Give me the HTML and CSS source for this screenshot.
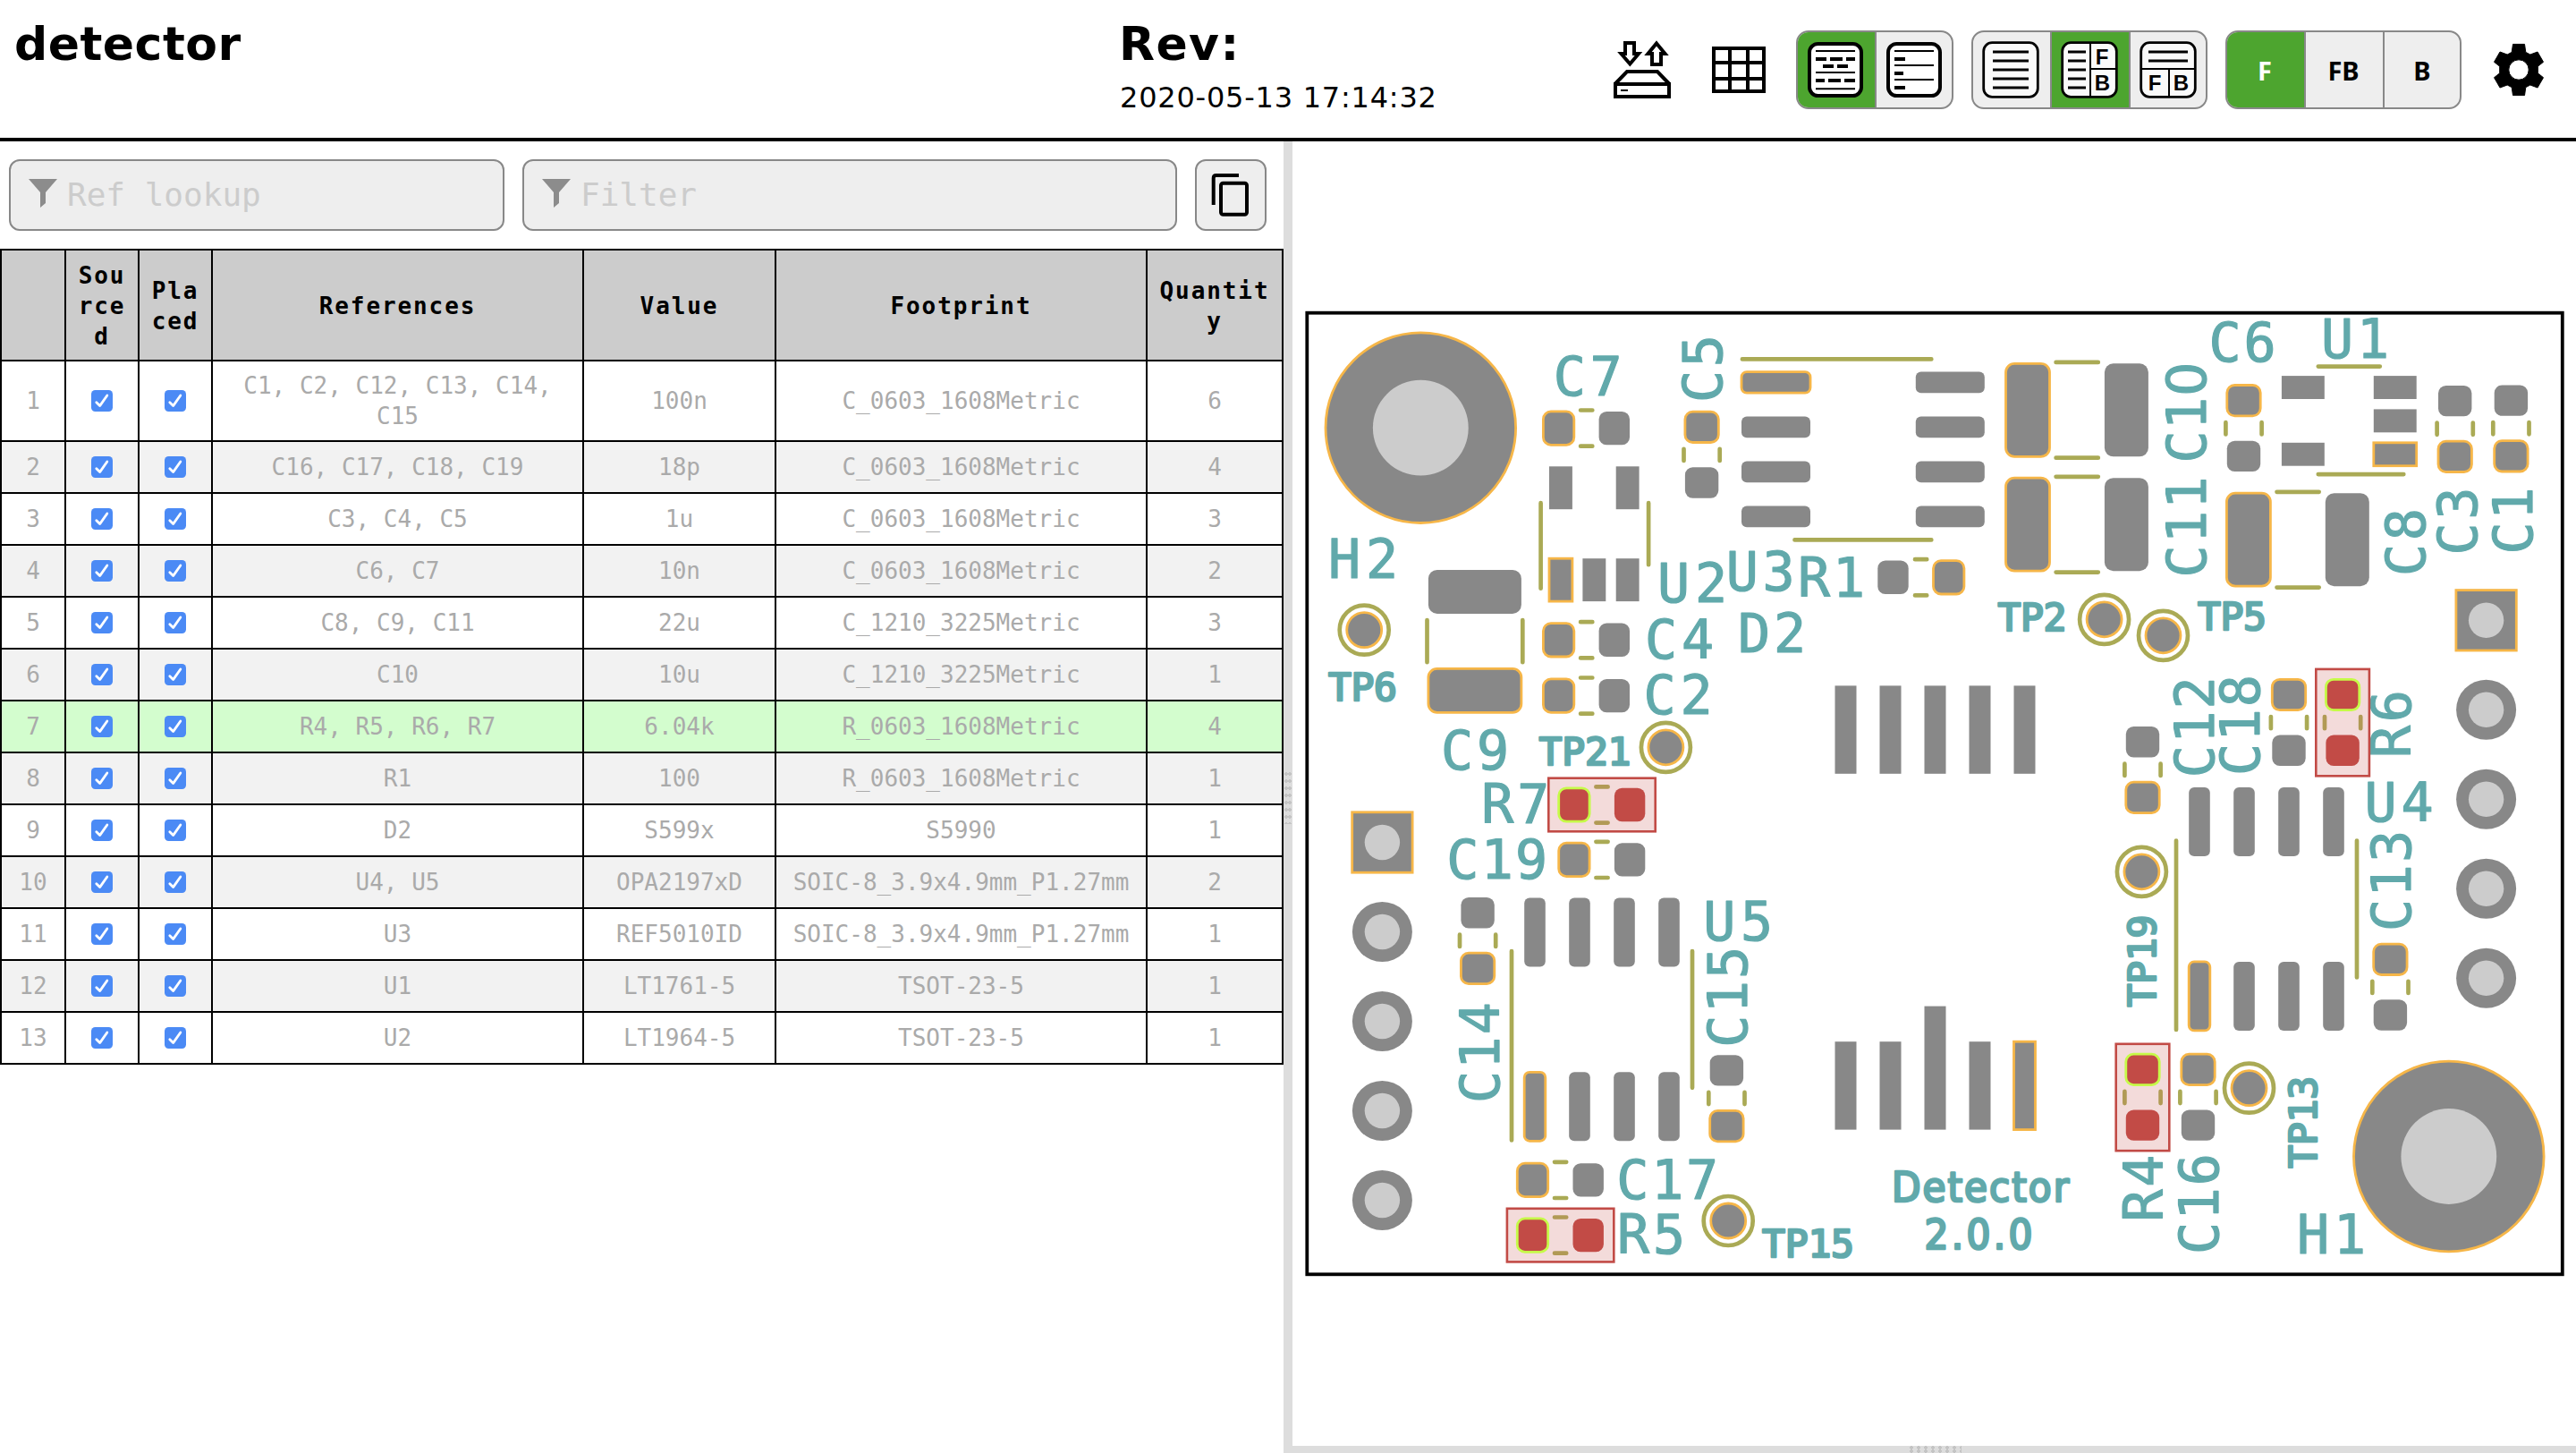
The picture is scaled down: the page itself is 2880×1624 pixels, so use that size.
FILE: index.html
```html
<!DOCTYPE html>
<html lang="en">
<head>
<meta charset="utf-8">
<title>detector BOM</title>
<link rel="stylesheet" href="styles.css">
</head>
<body>
<svg class="defs" width="0" height="0" aria-hidden="true">
  <defs>
    <symbol id="check" viewBox="0 0 24 24"><rect class="check-box" width="24" height="24" rx="4.5"/><path class="check-mark" d="M5.8 13.8 9.6 17.6 17.8 6"/></symbol>
    <symbol id="funnel" viewBox="0 0 32 32"><path class="funnel" d="M0 0H32L19 15V27L13 32V15Z"/></symbol>
    <g id="smd0603">
      <path class="silk" d="M-6.6-20.1H6.6M-6.6 20.1H6.6"/>
      <rect class="pad pin1" x="-48.3" y="-18.7" width="34.4" height="37.4" rx="8.6"/>
      <rect class="pad" x="13.9" y="-18.7" width="34.4" height="37.4" rx="8.6"/>
    </g>
    <g id="smd1210">
      <path class="silk" d="M-23.6-53.4H23.6M-23.6 53.4H23.6"/>
      <rect class="pad pin1" x="-79.7" y="-52" width="49" height="104" rx="9.8"/>
      <rect class="pad" x="30.7" y="-52" width="49" height="104" rx="9.8"/>
    </g>
    <g id="soic8">
      <path class="silk" d="M-135-101H76.4M-76.4 101H76.4"/>
      <rect class="pad pin1" x="-135.9" y="-86.8" width="77" height="23.6" rx="5.9"/>
      <rect class="pad" x="-135.9" y="-36.8" width="77" height="23.6" rx="5.9"/>
      <rect class="pad" x="-135.9" y="13.2" width="77" height="23.6" rx="5.9"/>
      <rect class="pad" x="-135.9" y="63.2" width="77" height="23.6" rx="5.9"/>
      <rect class="pad" x="58.9" y="-86.8" width="77" height="23.6" rx="5.9"/>
      <rect class="pad" x="58.9" y="-36.8" width="77" height="23.6" rx="5.9"/>
      <rect class="pad" x="58.9" y="13.2" width="77" height="23.6" rx="5.9"/>
      <rect class="pad" x="58.9" y="63.2" width="77" height="23.6" rx="5.9"/>
    </g>
    <g id="tsot5">
      <path class="silk" d="M-59.7-34.5V61M60.8-34.5V34.5"/>
      <rect class="pad" x="-50.3" y="-75.4" width="25.9" height="47.9"/>
      <rect class="pad" x="24.4" y="-75.4" width="25.9" height="47.9"/>
      <rect class="pad pin1" x="-50.3" y="27.5" width="25.9" height="47.9"/>
      <rect class="pad" x="-12.9" y="27.5" width="25.9" height="47.9"/>
      <rect class="pad" x="24.4" y="27.5" width="25.9" height="47.9"/>
    </g>
    <g id="testpoint"><circle class="silk" r="27.5"/><circle class="pad pin1" r="19.5"/></g>
    <g id="mount"><circle class="pad pin1" r="106.3"/><circle class="hole" r="53.4"/></g>
    <g id="header5">
      <rect class="pad pin1" x="-33.7" y="-33.7" width="67.4" height="67.4"/><circle class="hole" r="19.7"/>
      <circle class="pad" r="33.5" cy="100"/><circle class="hole" r="19.7" cy="100"/>
      <circle class="pad" r="33.5" cy="200"/><circle class="hole" r="19.7" cy="200"/>
      <circle class="pad" r="33.5" cy="300"/><circle class="hole" r="19.7" cy="300"/>
      <circle class="pad" r="33.5" cy="400"/><circle class="hole" r="19.7" cy="400"/>
    </g>
    <g id="picked"><rect class="picked-box" x="-59.7" y="-29.8" width="119.4" height="59.6"/><use href="#smd0603"/></g>
  </defs>
</svg>

<header class="topbar">
  <h1 class="title">detector</h1>
  <div class="meta"><div class="rev">Rev:</div><div class="date">2020-05-13 17:14:32</div></div>
  <div class="tools">
    <svg class="icon-save" width="72" height="72" viewBox="0 0 72 72"><path d="M17 6H27V18H32L22.3 29.5 12.5 18H17ZM52 6.500 61.500 18H57V30H47V18H42.500ZM6 52H66V66H6ZM6 51.500 19 38H53L66 51.500"/><path class="thin" d="M12 59H20"/></svg>
    <svg class="icon-grid" width="60" height="52" viewBox="0 0 60 52"><path d="M2 2H58V50H2ZM20 2V50M40 2V50M2 18H58M2 36H58"/></svg>
    <div class="group">
      <div class="btn on"><svg width="62" height="62" viewBox="0 0 62 62"><rect class="frame heavy" x="2" y="2" width="58" height="58" rx="9.500"/><path class="l2" d="M9 10H53M9 34H53M9 52.200H53"/><path class="l4" d="M9 19H21M25 19H39M43 19H53M17 27H29M33 27H45M9 43H19M23 43H37M41 43H53"/></svg></div>
      <div class="btn"><svg width="62" height="62" viewBox="0 0 62 62"><rect class="frame heavy" x="2" y="2" width="58" height="58" rx="9.500"/><path class="l2" d="M9 10H53M9 26H53M9 42H53"/><path class="l4" d="M9 19H21M9 35H19M9 51H21"/></svg></div>
    </div>
    <div class="group">
      <div class="btn"><svg width="64" height="64" viewBox="0 0 64 64"><rect class="frame" x="1.700" y="1.700" width="60.600" height="60.600" rx="9.500"/><path class="l3" d="M12 12H52M12 22H52M12 32H52M12 42H52M12 52H52"/></svg></div>
      <div class="btn on"><svg width="64" height="64" viewBox="0 0 64 64"><rect class="frame" x="1.700" y="1.700" width="60.600" height="60.600" rx="9.500"/><path class="l3" d="M8 12H28M8 22H28M8 32H28M8 42H28M8 52H28"/><path class="l2" d="M33 2V62M33 31H62"/><text x="46" y="26">F</text><text x="46.500" y="55">B</text></svg></div>
      <div class="btn"><svg width="64" height="64" viewBox="0 0 64 64"><rect class="frame" x="1.700" y="1.700" width="60.600" height="60.600" rx="9.500"/><path class="l3" d="M10 12H54M10 22H54"/><path class="l2" d="M2 31H62M33 31V62"/><text x="17" y="55">F</text><text x="46.500" y="55">B</text></svg></div>
    </div>
    <div class="group">
      <div class="btn on">F</div><div class="btn">FB</div><div class="btn">B</div>
    </div>
    <svg class="icon-gear" width="60" height="60" viewBox="-30 -30 60 60"><path fill-rule="evenodd" d="M-6.500-28.600H6.500L7.800-19.600 12.800-17 21-20 27.500-8.700 21.300-3.800V3.800L27.500 8.700 21 20 12.800 17 7.800 19.600 6.500 28.600H-6.500L-7.800 19.600-12.800 17-21 20-27.500 8.700-21.300 3.800V-3.800L-27.500-8.700-21-20-12.800-17-7.800-19.600ZM0-11.200A11.200 11.200 0 1 0 0 11.200 11.200 11.200 0 1 0 0-11.200Z"/></svg>
  </div>
</header>

<main class="panes">
  <section class="bom-pane">
    <div class="filters">
      <div class="field ref"><svg width="32" height="32"><use href="#funnel"/></svg><span>Ref lookup</span></div>
      <div class="field filter"><svg width="32" height="32"><use href="#funnel"/></svg><span>Filter</span></div>
      <div class="copy"><svg width="48" height="48" viewBox="0 0 48 48"><path d="M4.700 35V5Q4.700 2 7.700 2H33"/><rect x="13" y="10.700" width="29" height="35" rx="2.500"/></svg></div>
    </div>
    <table class="bom">
      <colgroup><col class="c-num"><col class="c-chk"><col class="c-chk"><col class="c-ref"><col class="c-val"><col class="c-foot"><col class="c-qty"></colgroup>
      <thead><tr><th></th><th>Sourced</th><th>Placed</th><th>References</th><th>Value</th><th>Footprint</th><th>Quantity</th></tr></thead>
      <tbody>
        <tr class="tall"><td>1</td><td><svg class="check"><use href="#check"/></svg></td><td><svg class="check"><use href="#check"/></svg></td><td>C1, C2, C12, C13, C14, C15</td><td>100n</td><td>C_0603_1608Metric</td><td>6</td></tr>
        <tr><td>2</td><td><svg class="check"><use href="#check"/></svg></td><td><svg class="check"><use href="#check"/></svg></td><td>C16, C17, C18, C19</td><td>18p</td><td>C_0603_1608Metric</td><td>4</td></tr>
        <tr><td>3</td><td><svg class="check"><use href="#check"/></svg></td><td><svg class="check"><use href="#check"/></svg></td><td>C3, C4, C5</td><td>1u</td><td>C_0603_1608Metric</td><td>3</td></tr>
        <tr><td>4</td><td><svg class="check"><use href="#check"/></svg></td><td><svg class="check"><use href="#check"/></svg></td><td>C6, C7</td><td>10n</td><td>C_0603_1608Metric</td><td>2</td></tr>
        <tr><td>5</td><td><svg class="check"><use href="#check"/></svg></td><td><svg class="check"><use href="#check"/></svg></td><td>C8, C9, C11</td><td>22u</td><td>C_1210_3225Metric</td><td>3</td></tr>
        <tr><td>6</td><td><svg class="check"><use href="#check"/></svg></td><td><svg class="check"><use href="#check"/></svg></td><td>C10</td><td>10u</td><td>C_1210_3225Metric</td><td>1</td></tr>
        <tr class="active"><td>7</td><td><svg class="check"><use href="#check"/></svg></td><td><svg class="check"><use href="#check"/></svg></td><td>R4, R5, R6, R7</td><td>6.04k</td><td>R_0603_1608Metric</td><td>4</td></tr>
        <tr><td>8</td><td><svg class="check"><use href="#check"/></svg></td><td><svg class="check"><use href="#check"/></svg></td><td>R1</td><td>100</td><td>R_0603_1608Metric</td><td>1</td></tr>
        <tr><td>9</td><td><svg class="check"><use href="#check"/></svg></td><td><svg class="check"><use href="#check"/></svg></td><td>D2</td><td>S599x</td><td>S5990</td><td>1</td></tr>
        <tr><td>10</td><td><svg class="check"><use href="#check"/></svg></td><td><svg class="check"><use href="#check"/></svg></td><td>U4, U5</td><td>OPA2197xD</td><td>SOIC-8_3.9x4.9mm_P1.27mm</td><td>2</td></tr>
        <tr><td>11</td><td><svg class="check"><use href="#check"/></svg></td><td><svg class="check"><use href="#check"/></svg></td><td>U3</td><td>REF5010ID</td><td>SOIC-8_3.9x4.9mm_P1.27mm</td><td>1</td></tr>
        <tr><td>12</td><td><svg class="check"><use href="#check"/></svg></td><td><svg class="check"><use href="#check"/></svg></td><td>U1</td><td>LT1761-5</td><td>TSOT-23-5</td><td>1</td></tr>
        <tr><td>13</td><td><svg class="check"><use href="#check"/></svg></td><td><svg class="check"><use href="#check"/></svg></td><td>U2</td><td>LT1964-5</td><td>TSOT-23-5</td><td>1</td></tr>
      </tbody>
    </table>
  </section>
  <div class="gutter"><i></i></div>
  <section class="board-pane">
    <svg class="board" width="1435" height="1458" viewBox="1445 158 1435 1458">
      <rect class="outline" x="1461.300" y="349.700" width="1403.500" height="1074.600"/>

      <use href="#mount" x="1588.300" y="478.200"/>
      <use href="#mount" x="2737.800" y="1292.500"/>
      <use href="#header5" x="1545.400" y="941.500"/>
      <use href="#header5" x="2779.600" y="693.300"/>

      <use href="#smd0603" transform="translate(1773.700 478.600)"/>
      <use href="#smd0603" transform="translate(1773.700 715.300)"/>
      <use href="#smd0603" transform="translate(1773.700 777.600)"/>
      <use href="#smd0603" transform="translate(1902.600 508.400) rotate(90)"/>
      <use href="#smd0603" transform="translate(2147.600 645.300) rotate(180)"/>
      <use href="#smd0603" transform="translate(2508.500 478.800) rotate(90)"/>
      <use href="#smd0603" transform="translate(2744.700 479.200) rotate(-90)"/>
      <use href="#smd0603" transform="translate(2807.400 478.700) rotate(-90)"/>
      <use href="#smd0603" transform="translate(2559 807.600) rotate(90)"/>
      <use href="#smd0603" transform="translate(2395.500 860.300) rotate(-90)"/>
      <use href="#smd0603" transform="translate(1791 960.900)"/>
      <use href="#smd0603" transform="translate(1652.100 1051.300) rotate(-90)"/>
      <use href="#smd0603" transform="translate(1930.400 1227.500) rotate(-90)"/>
      <use href="#smd0603" transform="translate(1744.600 1318.900)"/>
      <use href="#smd0603" transform="translate(2672.400 1103.400) rotate(90)"/>
      <use href="#smd0603" transform="translate(2457.500 1226.500) rotate(90)"/>

      <use href="#smd1210" transform="translate(2322.200 458.300)"/>
      <use href="#smd1210" transform="translate(2322.200 586.200)"/>
      <use href="#smd1210" transform="translate(2569.100 603.200)"/>
      <use href="#smd1210" transform="translate(1648.900 716.600) rotate(-90)"/>

      <use href="#soic8" transform="translate(2082.900 502.400)"/>
      <use href="#soic8" transform="translate(1791 1139.400) rotate(-90)"/>
      <use href="#soic8" transform="translate(2534 1016) rotate(-90)"/>
      <use href="#tsot5" transform="translate(1782.300 596.700)"/>
      <use href="#tsot5" transform="translate(2626.300 470.400) rotate(-90)"/>

      <g>
        <rect class="pad" x="2051.500" y="766.400" width="24" height="98.400"/><rect class="pad" x="2101.500" y="766.400" width="24" height="98.400"/><rect class="pad" x="2151.500" y="766.400" width="24" height="98.400"/><rect class="pad" x="2201.500" y="766.400" width="24" height="98.400"/><rect class="pad" x="2251.500" y="766.400" width="24" height="98.400"/>
        <rect class="pad" x="2051.500" y="1164.200" width="24" height="98.400"/><rect class="pad" x="2101.500" y="1164.200" width="24" height="98.400"/><rect class="pad" x="2151.500" y="1124.600" width="24" height="138"/><rect class="pad" x="2201.500" y="1164.200" width="24" height="98.400"/><rect class="pad pin1" x="2251.500" y="1164.200" width="24" height="98.400"/>
      </g>

      <use href="#testpoint" x="1525.200" y="704.100"/>
      <use href="#testpoint" x="1862.400" y="835.300"/>
      <use href="#testpoint" x="2352.600" y="692.300"/>
      <use href="#testpoint" x="2418.500" y="710.300"/>
      <use href="#testpoint" x="1932.200" y="1364.500"/>
      <use href="#testpoint" x="2394.400" y="974.300"/>
      <use href="#testpoint" x="2514.500" y="1216.200"/>

      <g class="labels">
        <text transform="translate(1775.200 420.400)" y="22" textLength="77">C7</text>
        <text transform="translate(1524 623.800)" y="22" textLength="78">H2</text>
        <text transform="translate(1892 651.400)" y="22" textLength="78">U2</text>
        <text transform="translate(1968.200 638.400)" y="22" textLength="77">U3</text>
        <text transform="translate(2047.500 644.600)" y="22" textLength="75">R1</text>
        <text transform="translate(1877.500 714)" y="22" textLength="77">C4</text>
        <text transform="translate(1981 707.100)" y="22" textLength="76">D2</text>
        <text transform="translate(1876 775.800)" y="22" textLength="77">C2</text>
        <text transform="translate(1649 837.600)" y="22" textLength="76">C9</text>
        <text transform="translate(1694.300 897.800)" y="22" textLength="76">R7</text>
        <text transform="translate(1673.700 959.800)" y="22" textLength="113">C19</text>
        <text transform="translate(1943.200 1028.500)" y="22" textLength="78">U5</text>
        <text transform="translate(1864.200 1317.800)" y="22" textLength="114">C17</text>
        <text transform="translate(1846 1378.500)" y="22" textLength="76">R5</text>
        <text transform="translate(2507 382.300)" y="22" textLength="75">C6</text>
        <text transform="translate(2633 377.500)" y="22" textLength="76">U1</text>
        <text transform="translate(2682 896)" y="22" textLength="77">U4</text>
        <text transform="translate(2606.500 1378.700)" y="22" textLength="77">H1</text>
        <text transform="translate(1903.300 412) rotate(-90)" y="22" textLength="76">C5</text>
        <text transform="translate(2443.800 461) rotate(-90)" y="22" textLength="113">C1<tspan class="zero">0</tspan></text>
        <text transform="translate(2443.800 589) rotate(-90)" y="22" textLength="113">C11</text>
        <text transform="translate(2688.500 606) rotate(-90)" y="22" textLength="76">C8</text>
        <text transform="translate(2746.800 582.500) rotate(-90)" y="22" textLength="76">C3</text>
        <text transform="translate(2809.200 582) rotate(-90)" y="22" textLength="75">C1</text>
        <text transform="translate(2453.400 812.800) rotate(-90)" y="22" textLength="113">C12</text>
        <text transform="translate(2503.900 810.500) rotate(-90)" y="22" textLength="113">C18</text>
        <text transform="translate(2672.900 809) rotate(-90)" y="22" textLength="76">R6</text>
        <text transform="translate(2673.300 984.400) rotate(-90)" y="22" textLength="113">C13</text>
        <text transform="translate(2395.500 1328) rotate(-90)" y="22" textLength="75">R4</text>
        <text transform="translate(2458 1345.500) rotate(-90)" y="22" textLength="113">C16</text>
        <text transform="translate(1653.500 1176.600) rotate(-90)" y="22" textLength="113">C14</text>
        <text transform="translate(1931.300 1114.300) rotate(-90)" y="22" textLength="113">C15</text>
      </g>
      <g class="labels small">
        <text transform="translate(1523.500 767)" y="15.700" textLength="77">TP6</text>
        <text transform="translate(1772 839.100)" y="15.700" textLength="103">TP21</text>
        <text transform="translate(2272 689.200)" y="15.700" textLength="77">TP2</text>
        <text transform="translate(2495.500 688.100)" y="15.700" textLength="77">TP5</text>
        <text transform="translate(2021.500 1389.400)" y="15.700" textLength="103">TP15</text>
        <text transform="translate(2394.200 1074) rotate(-90)" y="15.700" textLength="103">TP19</text>
        <text transform="translate(2574.100 1254.300) rotate(-90)" y="15.700" textLength="103">TP13</text>
      </g>
      <g class="labels name">
        <text x="2214" y="1343" textLength="198">Detector</text>
        <text x="2212" y="1396" textLength="121">2.0.0</text>
      </g>

      <g class="selected">
        <use href="#picked" transform="translate(1791 899.500)"/>
        <use href="#picked" transform="translate(1744.600 1380.600)"/>
        <use href="#picked" transform="translate(2619.100 807.600) rotate(90)"/>
        <use href="#picked" transform="translate(2395.500 1226.500) rotate(90)"/>
      </g>
    </svg>
    <div class="gutter-bottom"><i></i></div>
  </section>
</main>
</body>
</html>
```
FILE: styles.css
```css
* { box-sizing: border-box; }
body { margin: 0; width: 2880px; height: 1624px; overflow: hidden; background: #fff; color: #000; font-family: "DejaVu Sans", Verdana, sans-serif; display: flex; flex-direction: column; }
svg { display: block; flex: none; }
.defs { display: none; }

.topbar { height: 158px; flex: none; border-bottom: 4px solid #000; display: flex; }
.title { margin: 0; padding: 18px 0 0 16px; width: 1252px; font-size: 52px; line-height: 62px; font-weight: bold; letter-spacing: .5px; }
.rev { font-size: 52px; line-height: 62px; font-weight: bold; padding-top: 18px; margin-left: -1px; letter-spacing: 1.4px; }
.date { font-size: 32px; line-height: 40px; padding-top: 9px; letter-spacing: .78px; white-space: nowrap; }
.tools { margin-left: auto; padding-right: 34px; height: 156px; display: flex; align-items: center; }
.icon-save { margin-right: 42px; }
.icon-save path, .icon-grid path { fill: none; stroke: #000; stroke-width: 4; }
.icon-save .thin { stroke-width: 2; }
.icon-grid { margin-right: 34px; }
.icon-gear { margin-left: 14px; }
.icon-gear path { stroke: #000; stroke-width: 1; stroke-linejoin: round; }

.group { height: 88px; display: flex; border: 2px solid #888; border-radius: 14px; overflow: hidden; background: #eee; margin-right: 20px; }
.btn { width: 88px; display: flex; align-items: center; justify-content: center; border-right: 2px solid #888; padding-right: 2px; font: bold 29px "Noto Sans", sans-serif; }
.btn:last-child { width: 84px; border-right: 0; padding-right: 0; }
.btn.on { background: #4da52f; color: #fff; }
.frame { fill: #fafafa; stroke: #000; stroke-width: 2.8; }
.frame.heavy { fill: #fff; stroke-width: 4; }
.l2, .l3, .l4 { fill: none; stroke: #000; stroke-width: 2; }
.l3 { stroke-width: 2.8; }
.l4 { stroke-width: 4; }
.btn text { font: bold 24px "Liberation Sans", Arial, sans-serif; text-anchor: middle; fill: #000; }

.panes { flex: 1; display: flex; min-height: 0; }
.bom-pane { width: 1435px; flex: none; }
.filters { display: flex; padding: 20px 0 20px 10px; height: 120px; }
.field, .copy { height: 80px; border: 2px solid #888; border-radius: 12px; background: #eee; }
.field { display: flex; align-items: center; gap: 11px; padding-left: 20px; margin-right: 20px; font: 36px "DejaVu Sans Mono", monospace; color: #ccc; }
.field svg { margin-top: -5px; }
.field span { margin-top: -2px; }
.ref { width: 554px; }
.filter { width: 732px; }
.funnel { fill: #8c8c8c; }
.copy { width: 80px; display: flex; justify-content: center; align-items: center; }
.copy path, .copy rect { fill: none; stroke: #000; stroke-width: 4; }

.bom { border-collapse: collapse; table-layout: fixed; width: 1434px; font: 26px/34px "DejaVu Sans Mono", monospace; color: #aaa; text-align: center; }
.c-num { width: 72px; }
.c-chk { width: 82px; }
.c-ref { width: 415px; }
.c-val { width: 215px; }
.c-foot { width: 415px; }
.c-qty { width: 152px; }
.bom th, .bom td { border: 2px solid #000; padding: 0 9px; overflow-wrap: break-word; }
.bom th { height: 124px; padding-top: 2px; background: #ccc; color: #000; letter-spacing: 1.9px; word-break: break-all; }
.bom td { height: 58px; }
.bom .tall td { height: 90px; }
.bom tbody tr:nth-child(even) { background: #f2f2f2; }
.bom tbody tr.active { background: #d3fdce; }
.check { width: 24px; height: 24px; margin: 0 auto; }
.check-box { fill: #4b8af5; }
.check-mark { fill: none; stroke: #fff; stroke-width: 2.8; stroke-linecap: round; stroke-linejoin: round; }

.gutter { width: 10px; flex: none; background: #ddd; display: flex; align-items: center; justify-content: center; }
.gutter i { width: 8px; height: 60px; background: radial-gradient(circle, #c4c4c4 1.8px, transparent 2px) 0 0 / 4px 8px; }
.board-pane { flex: 1; display: flex; flex-direction: column; }
.gutter-bottom { height: 8px; background: #ddd; display: flex; justify-content: center; }
.gutter-bottom i { width: 60px; height: 8px; background: radial-gradient(circle, #c4c4c4 1.8px, transparent 2px) 0 0 / 8px 4px; }

.board { --pad: #888; --pin1: #f6b648; --silk: #aaaa55; }
.selected { --pad: #c24b46; --pin1: #c6fb48; --silk: #b19a55; }
.outline { fill: none; stroke: #000; stroke-width: 3.8; }
.pad { fill: var(--pad); }
.pin1 { stroke: var(--pin1); stroke-width: 2.8; }
.hole { fill: #ccc; }
.silk { fill: none; stroke: var(--silk); stroke-width: 4.7; stroke-linecap: round; }
.picked-box { fill: #f3dbda; stroke: #c24b46; stroke-width: 2.6; }
.labels text { fill: #61a9ab; stroke: #61a9ab; stroke-width: 1.2; stroke-linejoin: round; font: 60px "DejaVu Sans Mono", monospace; text-anchor: middle; }
.labels .zero { font-family: "DejaVu Sans", sans-serif; }
.labels.small text { font-size: 43px; stroke-width: 2.6; }
.labels.name text { font: 47px "DejaVu Sans Condensed", "DejaVu Sans", sans-serif; stroke-width: 2.6; }
```
